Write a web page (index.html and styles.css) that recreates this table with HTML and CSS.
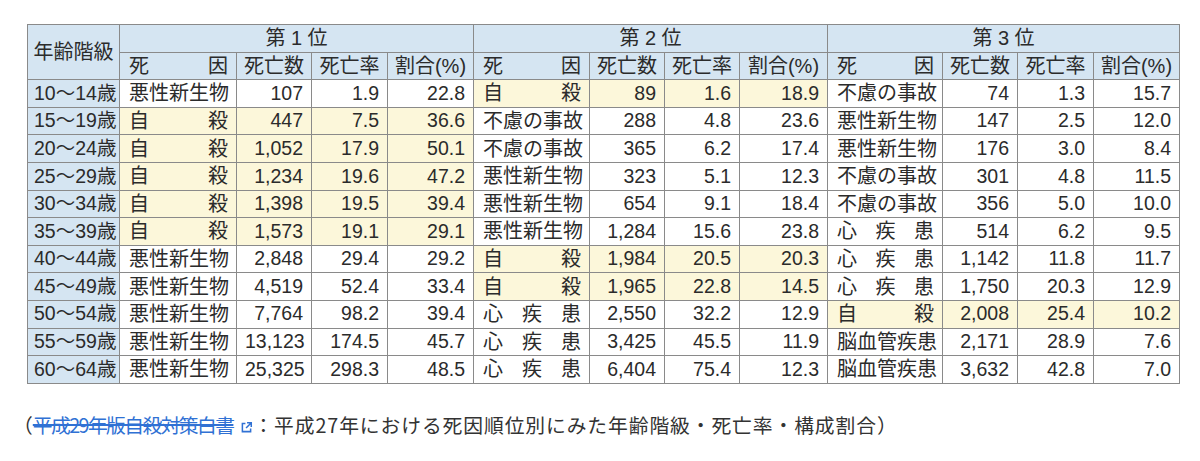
FILE: index.html
```html
<!DOCTYPE html>
<html lang="ja">
<head>
<meta charset="utf-8">
<title>年齢階級別死因順位</title>
<link rel="stylesheet" href="styles.css">
</head>
<body>
<div class="page">
<table class="stats">
<colgroup>
<col class="c-age">
<col class="c-cause1"><col class="c-num"><col class="c-rate1"><col class="c-pct1">
<col class="c-cause2"><col class="c-num"><col class="c-num"><col class="c-pct2">
<col class="c-cause3"><col class="c-num"><col class="c-rate1"><col class="c-pct1">
</colgroup>
<thead>
<tr>
<th rowspan="2" class="age-h">年齢階級</th>
<th colspan="4" class="grp">第 1 位</th>
<th colspan="4" class="grp">第 2 位</th>
<th colspan="4" class="grp">第 3 位</th>
</tr>
<tr>
<th class="cause"><span class="sp"><span>死</span><span>因</span></span></th><th>死亡数</th><th>死亡率</th><th>割合(%)</th>
<th class="cause"><span class="sp"><span>死</span><span>因</span></span></th><th>死亡数</th><th>死亡率</th><th>割合(%)</th>
<th class="cause"><span class="sp"><span>死</span><span>因</span></span></th><th>死亡数</th><th>死亡率</th><th>割合(%)</th>
</tr>
</thead>
<tbody>
<tr>
<th class="age">10〜14歳</th>
<td class="cause">悪性新生物</td><td>107</td><td>1.9</td><td>22.8</td>
<td class="cause hl"><span class="sp"><span>自</span><span>殺</span></span></td><td class="hl">89</td><td class="hl">1.6</td><td class="hl">18.9</td>
<td class="cause">不慮の事故</td><td>74</td><td>1.3</td><td>15.7</td>
</tr>
<tr>
<th class="age">15〜19歳</th>
<td class="cause hl"><span class="sp"><span>自</span><span>殺</span></span></td><td class="hl">447</td><td class="hl">7.5</td><td class="hl">36.6</td>
<td class="cause">不慮の事故</td><td>288</td><td>4.8</td><td>23.6</td>
<td class="cause">悪性新生物</td><td>147</td><td>2.5</td><td>12.0</td>
</tr>
<tr>
<th class="age">20〜24歳</th>
<td class="cause hl"><span class="sp"><span>自</span><span>殺</span></span></td><td class="hl">1,052</td><td class="hl">17.9</td><td class="hl">50.1</td>
<td class="cause">不慮の事故</td><td>365</td><td>6.2</td><td>17.4</td>
<td class="cause">悪性新生物</td><td>176</td><td>3.0</td><td>8.4</td>
</tr>
<tr>
<th class="age">25〜29歳</th>
<td class="cause hl"><span class="sp"><span>自</span><span>殺</span></span></td><td class="hl">1,234</td><td class="hl">19.6</td><td class="hl">47.2</td>
<td class="cause">悪性新生物</td><td>323</td><td>5.1</td><td>12.3</td>
<td class="cause">不慮の事故</td><td>301</td><td>4.8</td><td>11.5</td>
</tr>
<tr>
<th class="age">30〜34歳</th>
<td class="cause hl"><span class="sp"><span>自</span><span>殺</span></span></td><td class="hl">1,398</td><td class="hl">19.5</td><td class="hl">39.4</td>
<td class="cause">悪性新生物</td><td>654</td><td>9.1</td><td>18.4</td>
<td class="cause">不慮の事故</td><td>356</td><td>5.0</td><td>10.0</td>
</tr>
<tr>
<th class="age">35〜39歳</th>
<td class="cause hl"><span class="sp"><span>自</span><span>殺</span></span></td><td class="hl">1,573</td><td class="hl">19.1</td><td class="hl">29.1</td>
<td class="cause">悪性新生物</td><td>1,284</td><td>15.6</td><td>23.8</td>
<td class="cause"><span class="sp"><span>心</span><span>疾</span><span>患</span></span></td><td>514</td><td>6.2</td><td>9.5</td>
</tr>
<tr>
<th class="age">40〜44歳</th>
<td class="cause">悪性新生物</td><td>2,848</td><td>29.4</td><td>29.2</td>
<td class="cause hl"><span class="sp"><span>自</span><span>殺</span></span></td><td class="hl">1,984</td><td class="hl">20.5</td><td class="hl">20.3</td>
<td class="cause"><span class="sp"><span>心</span><span>疾</span><span>患</span></span></td><td>1,142</td><td>11.8</td><td>11.7</td>
</tr>
<tr>
<th class="age">45〜49歳</th>
<td class="cause">悪性新生物</td><td>4,519</td><td>52.4</td><td>33.4</td>
<td class="cause hl"><span class="sp"><span>自</span><span>殺</span></span></td><td class="hl">1,965</td><td class="hl">22.8</td><td class="hl">14.5</td>
<td class="cause"><span class="sp"><span>心</span><span>疾</span><span>患</span></span></td><td>1,750</td><td>20.3</td><td>12.9</td>
</tr>
<tr>
<th class="age">50〜54歳</th>
<td class="cause">悪性新生物</td><td>7,764</td><td>98.2</td><td>39.4</td>
<td class="cause"><span class="sp"><span>心</span><span>疾</span><span>患</span></span></td><td>2,550</td><td>32.2</td><td>12.9</td>
<td class="cause hl"><span class="sp"><span>自</span><span>殺</span></span></td><td class="hl">2,008</td><td class="hl">25.4</td><td class="hl">10.2</td>
</tr>
<tr>
<th class="age">55〜59歳</th>
<td class="cause">悪性新生物</td><td>13,123</td><td>174.5</td><td>45.7</td>
<td class="cause"><span class="sp"><span>心</span><span>疾</span><span>患</span></span></td><td>3,425</td><td>45.5</td><td>11.9</td>
<td class="cause">脳血管疾患</td><td>2,171</td><td>28.9</td><td>7.6</td>
</tr>
<tr>
<th class="age">60〜64歳</th>
<td class="cause">悪性新生物</td><td>25,325</td><td>298.3</td><td>48.5</td>
<td class="cause"><span class="sp"><span>心</span><span>疾</span><span>患</span></span></td><td>6,404</td><td>75.4</td><td>12.3</td>
<td class="cause">脳血管疾患</td><td>3,632</td><td>42.8</td><td>7.0</td>
</tr>
</tbody>
</table>
<p class="caption">（<a class="src" href="#">平成29年版自殺対策白書</a><svg class="ext" viewBox="0 0 12 12" width="13" height="13" aria-hidden="true"><path d="M5 2.2H2.2v7.6h7.6V7" fill="none" stroke="currentColor" stroke-width="1.4"/><path d="M6.5 1.6h3.9v3.9M10.2 1.8L5.6 6.4" fill="none" stroke="currentColor" stroke-width="1.4"/></svg><span class="rest">：平成27年における死因順位別にみた年齢階級・死亡率・構成割合）</span></p>
</div>
</body>
</html>
```
FILE: styles.css
```css
html, body {
  margin: 0;
  padding: 0;
  background: #ffffff;
}

.page {
  padding: 24px 0 0 27px;
  font-family: "Liberation Sans", "Noto Sans CJK JP", sans-serif;
  color: #2b2b2b;
}

.stats {
  border-collapse: collapse;
  table-layout: fixed;
  width: 1153px;
  font-size: 20px;
  line-height: 1;
}

.c-age { width: 92px; }
.c-cause1 { width: 117px; }
.c-cause2 { width: 116px; }
.c-cause3 { width: 115px; }
.c-num { width: 75px; }
.c-rate1 { width: 76px; }
.c-pct1 { width: 86px; }
.c-pct2 { width: 88px; }

.stats tr {
  height: 27.6px;
}

.stats th,
.stats td {
  border: 1px solid #8a8a8a;
  padding: 0 8px 0 8px;
  font-weight: normal;
  white-space: nowrap;
  overflow: hidden;
}

.stats thead th {
  background: #d5e5f2;
  text-align: center;
  padding: 0 4px;
}

.stats thead th.cause {
  padding: 0 8px 0 9px;
}

.stats .age-h {
  padding: 0 4px;
}

.stats tbody th.age {
  background: #d5e5f2;
  text-align: left;
  padding: 0 0 0 6px;
  font-size: 19.5px;
}

.stats td {
  text-align: right;
  font-size: 19.5px;
  background: #ffffff;
}

.stats td.cause {
  text-align: left;
  font-size: 20px;
  padding: 0 8px 0 9px;
}

.stats td.hl {
  background: #fcf7da;
}

.sp {
  display: flex;
  justify-content: space-between;
}

.caption {
  margin: 27px 0 0 -14px;
  font-family: "Noto Sans CJK JP", sans-serif;
  font-size: 19.8px;
  line-height: 28px;
  color: #333333;
}

.src {
  color: #3071d4;
  letter-spacing: -1.6px;
  text-decoration: line-through;
  text-decoration-thickness: 1.5px;
}

.ext {
  color: #3071d4;
  vertical-align: -1px;
  margin: 0 0 0 7px;
}

.rest {
  letter-spacing: 0.9px;
}
```
